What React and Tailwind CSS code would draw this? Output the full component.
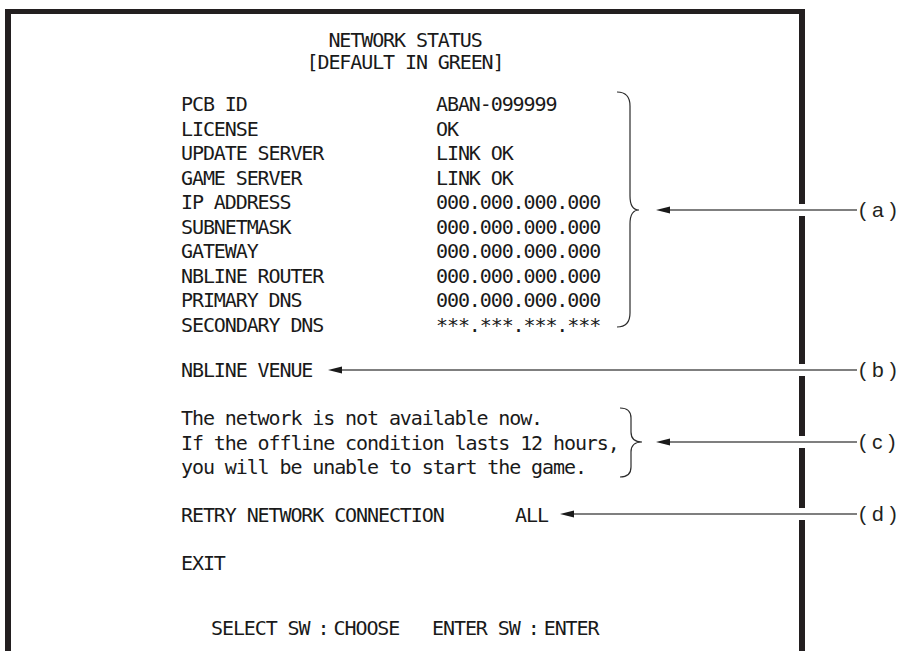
import React from 'react';

const rows = [
  ['PCB ID', 'ABAN-099999'],
  ['LICENSE', 'OK'],
  ['UPDATE SERVER', 'LINK OK'],
  ['GAME SERVER', 'LINK OK'],
  ['IP ADDRESS', '000.000.000.000'],
  ['SUBNETMASK', '000.000.000.000'],
  ['GATEWAY', '000.000.000.000'],
  ['NBLINE ROUTER', '000.000.000.000'],
  ['PRIMARY DNS', '000.000.000.000'],
  ['SECONDARY DNS', '***.***.***.***'],
];

// callout lines: y of the line, x of the arrow tip
const callouts = [
  { id: 'a', y: 210, tip: 656 },
  { id: 'b', y: 370, tip: 328 },
  { id: 'c', y: 442, tip: 656 },
  { id: 'd', y: 514, tip: 560 },
];

const Callouts = () => (
  <svg className="absolute inset-0 pointer-events-none" width="905" height="651" viewBox="0 0 905 651">
    {/* brace (a) */}
    <path
      d="M617 92 Q630 92 630 106 L630 196 Q630 210 639 210 Q630 210 630 224 L630 313 Q630 327 617 327"
      fill="none"
      stroke="#2b2b2b"
      strokeWidth="1.2"
    />
    {/* brace (c) */}
    <path
      d="M620 408 Q631 408 631 418 L631 432 Q631 442 642 442 Q631 442 631 452 L631 467 Q631 477 620 477"
      fill="none"
      stroke="#2b2b2b"
      strokeWidth="1.2"
    />
    {callouts.map((c) => (
      <g key={c.id}>
        <rect x="796" y={c.y - 6} width="12" height="12" fill="#ffffff" />
        <line x1={c.tip + 12} y1={c.y} x2="857" y2={c.y} stroke="#555555" strokeWidth="1.4" />
        <path d={`M${c.tip} ${c.y} L${c.tip + 14} ${c.y - 3.5} L${c.tip + 14} ${c.y + 3.5} Z`} fill="#1a1a1a" />
      </g>
    ))}
  </svg>
);

export default function App() {
  return (
    <div className="relative w-[905px] h-[651px] overflow-hidden bg-white text-[#1a1a1a]">
      {/* Screen frame */}
      <div className="ml-[5px] mt-[9px] w-[800px] h-[642px] border-[#231f20] border-t-[5px] border-l-[6px] border-r-[6px] pl-[170px] font-['DejaVu_Sans_Mono',monospace] text-[20px] tracking-[-1.1px] leading-[24.5px]">
        <div className="-ml-[170px] pt-[15px] text-center leading-[22px]">
          <div>NETWORK STATUS</div>
          <div>[DEFAULT IN GREEN]</div>
        </div>

        <div className="mt-[19px]">
          {rows.map(([label, value]) => (
            <div key={label} className="flex">
              <div className="w-[255px] whitespace-pre">{label}</div>
              <div className="whitespace-pre">{value}</div>
            </div>
          ))}
        </div>

        <div className="mt-[21px]">NBLINE VENUE</div>

        <div className="mt-[23.5px]">
          <div>The network is not available now.</div>
          <div>If the offline condition lasts 12 hours,</div>
          <div>you will be unable to start the game.</div>
        </div>

        <div className="mt-[23.5px] flex">
          <div className="w-[334px]">RETRY NETWORK CONNECTION</div>
          <div>ALL</div>
        </div>

        <div className="mt-[23.5px]">EXIT</div>

        <div className="mt-[40px] ml-[30px] whitespace-pre">
          SELECT SW<span className="tracking-[-4px]"> : </span>CHOOSE   ENTER SW<span className="tracking-[-4px]"> : </span>ENTER
        </div>
      </div>

      <Callouts />

      {/* Labels */}
      {callouts.map((c) => (
        <div
          key={c.id}
          className="absolute left-[859px] h-[22px] flex items-center font-['Liberation_Sans',Arial,sans-serif] text-[21px] tracking-[6px] text-[#231f20]"
          style={{ top: c.y - 11 }}
        >
          ({c.id})
        </div>
      ))}
    </div>
  );
}
